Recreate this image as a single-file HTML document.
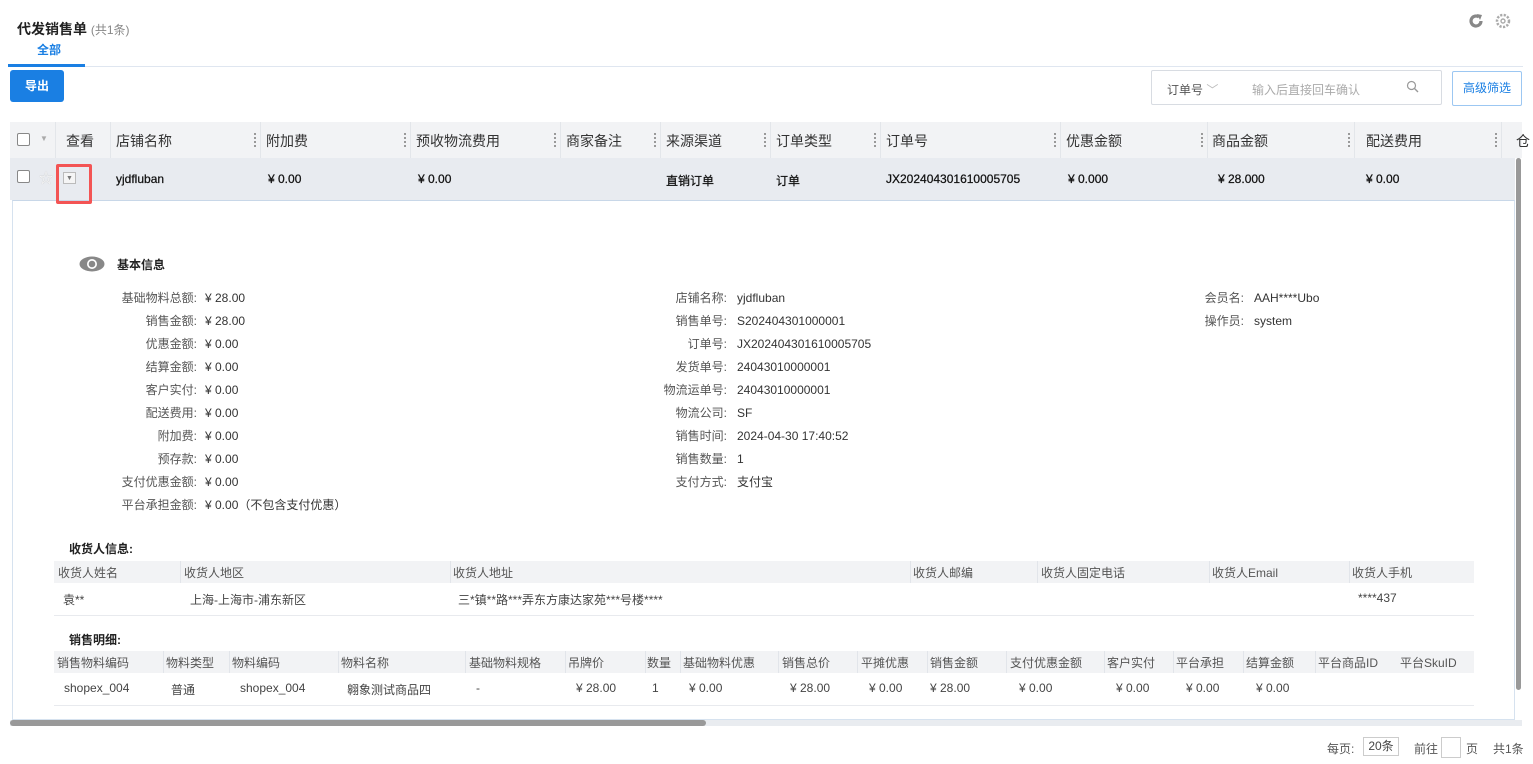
<!DOCTYPE html>
<html><head><meta charset="utf-8">
<style>
*{margin:0;padding:0;box-sizing:border-box}
body{width:1533px;height:764px;overflow:hidden;background:#fff;font-family:"Liberation Sans","Noto Sans CJK SC",sans-serif;color:#333;position:relative}
.a{position:absolute;white-space:nowrap}
.th{font-size:14px;color:#333;top:131px}
.td{font-size:12px;color:#111;top:172px;font-weight:normal;-webkit-text-stroke:0.25px #111}
.sep{position:absolute;top:133px;width:2px;height:14px;border-left:2px dotted #999}
.vl{position:absolute;top:122px;height:36px;width:1px;background:#e3e6ea}
.lab{position:absolute;font-size:12px;color:#555;text-align:right}
.val{position:absolute;font-size:12px;color:#333}
.h2{font-size:12px;color:#555}
.t2{font-size:12px;color:#444}
.cv{position:absolute;width:1px;background:#e2e5ea}
</style></head><body>
<div class="a" style="left:17px;top:19px;font-size:14px;font-weight:bold;color:#222">代发销售单 <span style="font-weight:normal;font-size:12px;color:#888">(共1条)</span></div>
<div class="a" style="left:37px;top:41px;font-size:12px;color:#1a7fe3;font-weight:bold">全部</div>
<div class="a" style="left:8px;top:66px;width:1515px;height:1px;background:#dfe6f0"></div>
<div class="a" style="left:8px;top:64px;width:77px;height:3px;background:#1a7fe3"></div>
<svg class="a" style="left:1468px;top:13px" width="16" height="16" viewBox="0 0 16 16"><path d="M13 8a5 5 0 1 1-2-4" fill="none" stroke="#888" stroke-width="3.2"/><path d="M9 1l5 1-2 5z" fill="#888"/></svg>
<svg class="a" style="left:1495px;top:13px" width="16" height="16" viewBox="0 0 16 16"><circle cx="8" cy="8" r="6" fill="none" stroke="#aaa" stroke-width="2.5" stroke-dasharray="2.2 1.4"/><circle cx="8" cy="8" r="2" fill="none" stroke="#aaa" stroke-width="1.4"/></svg>
<div class="a" style="left:10px;top:70px;width:54px;height:32px;background:#1a7fe3;border-radius:3px;color:#fff;font-size:12px;font-weight:bold;text-align:center;line-height:32px">导出</div>
<div class="a" style="left:1151px;top:70px;width:291px;height:35px;border:1px solid #d8dce2;border-radius:2px"></div>
<div class="a" style="left:1167px;top:81px;font-size:12px;color:#555">订单号 <span style="color:#bbb">﹀</span></div>
<div class="a" style="left:1252px;top:81px;font-size:12px;color:#aaa">输入后直接回车确认</div>
<svg class="a" style="left:1406px;top:80px" width="14" height="14" viewBox="0 0 14 14"><circle cx="5.5" cy="5.5" r="4" fill="none" stroke="#999" stroke-width="1.2"/><path d="M8.5 8.5l3.5 3.5" stroke="#999" stroke-width="1.4"/></svg>
<div class="a" style="left:1452px;top:71px;width:70px;height:35px;border:1px solid #9cc7f2;border-radius:2px;color:#1a7fe3;font-size:12px;text-align:center;line-height:33px">高级筛选</div>

<div class="a" style="left:10px;top:122px;width:1512px;height:36px;background:#f2f3f5"></div>
<div class="a" style="left:10px;top:158px;width:1505px;height:42px;background:#e8ebf0"></div>
<div class="vl" style="left:55px"></div><div class="vl" style="left:110px"></div><div class="vl" style="left:260px"></div><div class="vl" style="left:410px"></div><div class="vl" style="left:560px"></div><div class="vl" style="left:660px"></div><div class="vl" style="left:770px"></div><div class="vl" style="left:880px"></div><div class="vl" style="left:1060px"></div><div class="vl" style="left:1207px"></div><div class="vl" style="left:1354px"></div><div class="vl" style="left:1501px"></div>
<div class="sep" style="left:254px"></div><div class="sep" style="left:404px"></div><div class="sep" style="left:554px"></div><div class="sep" style="left:654px"></div><div class="sep" style="left:764px"></div><div class="sep" style="left:874px"></div><div class="sep" style="left:1054px"></div><div class="sep" style="left:1201px"></div><div class="sep" style="left:1348px"></div><div class="sep" style="left:1495px"></div>
<div class="a" style="left:17px;top:133px;width:13px;height:13px;border:1px solid #888;border-radius:2px;background:#fff"></div>
<div class="a" style="left:40px;top:134px;font-size:8px;color:#aaa">▼</div>
<div class="a th" style="left:66px">查看</div><div class="a th" style="left:116px">店铺名称</div><div class="a th" style="left:266px">附加费</div><div class="a th" style="left:416px">预收物流费用</div><div class="a th" style="left:566px">商家备注</div><div class="a th" style="left:666px">来源渠道</div><div class="a th" style="left:776px">订单类型</div><div class="a th" style="left:886px">订单号</div><div class="a th" style="left:1066px">优惠金额</div><div class="a th" style="left:1212px">商品金额</div><div class="a th" style="left:1366px">配送费用</div><div class="a th" style="left:1516px">仓</div>

<div class="a" style="left:17px;top:170px;width:13px;height:13px;border:1px solid #888;border-radius:2px;background:#fff"></div>
<div class="a" style="left:39px;top:168px;font-size:14px;color:#fff;text-shadow:0 0 1px #aaa">☆</div>
<div class="a td" style="left:116px">yjdfluban</div><div class="a td" style="left:268px">¥ 0.00</div><div class="a td" style="left:418px">¥ 0.00</div><div class="a td" style="left:666px">直销订单</div><div class="a td" style="left:776px">订单</div><div class="a td" style="left:886px">JX202404301610005705</div><div class="a td" style="left:1068px">¥ 0.000</div><div class="a td" style="left:1218px">¥ 28.000</div><div class="a td" style="left:1366px">¥ 0.00</div>

<div class="a" style="left:12px;top:200px;width:1503px;height:520px;border:1px solid #d6e2ef;border-top:1px solid #c8d7e8;background:#fff"></div>
<div class="a" style="left:1516px;top:158px;width:5px;height:532px;background:#999;border-radius:3px"></div>
<div class="a" style="left:56px;top:164px;width:36px;height:40px;border:3px solid #f35454;border-radius:2px"></div>
<div class="a" style="left:63px;top:172px;width:13px;height:12px;border:1px solid #bbb;background:#f5f5f5;font-size:7px;color:#777;text-align:center;line-height:11px">▼</div>

<svg class="a" style="left:79px;top:256px" width="26" height="16" viewBox="0 0 26 16"><ellipse cx="13" cy="8" rx="12.5" ry="7.5" fill="#888"/><circle cx="13" cy="8" r="5" fill="#fff"/><circle cx="13" cy="8" r="3.3" fill="#888"/></svg>
<div class="a" style="left:117px;top:256px;font-size:12px;font-weight:bold;color:#222">基本信息</div>

<div class="lab" style="left:60px;width:137px;top:287px;line-height:23px">基础物料总额:<br>销售金额:<br>优惠金额:<br>结算金额:<br>客户实付:<br>配送费用:<br>附加费:<br>预存款:<br>支付优惠金额:<br>平台承担金额:</div>
<div class="val" style="left:205px;top:287px;line-height:23px">¥ 28.00<br>¥ 28.00<br>¥ 0.00<br>¥ 0.00<br>¥ 0.00<br>¥ 0.00<br>¥ 0.00<br>¥ 0.00<br>¥ 0.00<br>¥ 0.00（不包含支付优惠）</div>
<div class="lab" style="left:600px;width:127px;top:287px;line-height:23px">店铺名称:<br>销售单号:<br>订单号:<br>发货单号:<br>物流运单号:<br>物流公司:<br>销售时间:<br>销售数量:<br>支付方式:</div>
<div class="val" style="left:737px;top:287px;line-height:23px">yjdfluban<br>S202404301000001<br>JX202404301610005705<br>24043010000001<br>24043010000001<br>SF<br>2024-04-30 17:40:52<br>1<br>支付宝</div>
<div class="lab" style="left:1150px;width:94px;top:287px;line-height:23px">会员名:<br>操作员:</div>
<div class="val" style="left:1254px;top:287px;line-height:23px">AAH****Ubo<br>system</div>

<div class="a" style="left:69px;top:540px;font-size:12px;font-weight:bold;color:#222">收货人信息:</div>
<div class="a" style="left:54px;top:561px;width:1420px;height:22px;background:#f2f3f5"></div>
<div class="a" style="left:54px;top:615px;width:1420px;height:1px;background:#e8eaee"></div>
<div class="cv" style="left:180px;top:561px;height:22px"></div><div class="cv" style="left:450px;top:561px;height:22px"></div><div class="cv" style="left:910px;top:561px;height:22px"></div><div class="cv" style="left:1037px;top:561px;height:22px"></div><div class="cv" style="left:1209px;top:561px;height:22px"></div><div class="cv" style="left:1349px;top:561px;height:22px"></div>
<div class="a h2" style="left:58px;top:564px">收货人姓名</div><div class="a h2" style="left:184px;top:564px">收货人地区</div><div class="a h2" style="left:453px;top:564px">收货人地址</div><div class="a h2" style="left:913px;top:564px">收货人邮编</div><div class="a h2" style="left:1041px;top:564px">收货人固定电话</div><div class="a h2" style="left:1212px;top:564px">收货人Email</div><div class="a h2" style="left:1352px;top:564px">收货人手机</div>
<div class="a t2" style="left:63px;top:591px">袁**</div><div class="a t2" style="left:190px;top:591px">上海-上海市-浦东新区</div><div class="a t2" style="left:458px;top:591px">三*镇**路***弄东方康达家苑***号楼****</div><div class="a t2" style="left:1358px;top:591px">****437</div>

<div class="a" style="left:69px;top:631px;font-size:12px;font-weight:bold;color:#222">销售明细:</div>
<div class="a" style="left:54px;top:651px;width:1420px;height:22px;background:#f2f3f5"></div>
<div class="a" style="left:54px;top:705px;width:1420px;height:1px;background:#e8eaee"></div>
<div class="cv" style="left:163px;top:651px;height:22px"></div><div class="cv" style="left:229px;top:651px;height:22px"></div><div class="cv" style="left:338px;top:651px;height:22px"></div><div class="cv" style="left:465px;top:651px;height:22px"></div><div class="cv" style="left:565px;top:651px;height:22px"></div><div class="cv" style="left:645px;top:651px;height:22px"></div><div class="cv" style="left:680px;top:651px;height:22px"></div><div class="cv" style="left:778px;top:651px;height:22px"></div><div class="cv" style="left:857px;top:651px;height:22px"></div><div class="cv" style="left:927px;top:651px;height:22px"></div><div class="cv" style="left:1006px;top:651px;height:22px"></div><div class="cv" style="left:1104px;top:651px;height:22px"></div><div class="cv" style="left:1173px;top:651px;height:22px"></div><div class="cv" style="left:1243px;top:651px;height:22px"></div><div class="cv" style="left:1315px;top:651px;height:22px"></div>
<div class="a h2" style="left:57px;top:654px">销售物料编码</div><div class="a h2" style="left:166px;top:654px">物料类型</div><div class="a h2" style="left:232px;top:654px">物料编码</div><div class="a h2" style="left:341px;top:654px">物料名称</div><div class="a h2" style="left:469px;top:654px">基础物料规格</div><div class="a h2" style="left:568px;top:654px">吊牌价</div><div class="a h2" style="left:647px;top:654px">数量</div><div class="a h2" style="left:683px;top:654px">基础物料优惠</div><div class="a h2" style="left:782px;top:654px">销售总价</div><div class="a h2" style="left:861px;top:654px">平摊优惠</div><div class="a h2" style="left:930px;top:654px">销售金额</div><div class="a h2" style="left:1010px;top:654px">支付优惠金额</div><div class="a h2" style="left:1107px;top:654px">客户实付</div><div class="a h2" style="left:1176px;top:654px">平台承担</div><div class="a h2" style="left:1246px;top:654px">结算金额</div><div class="a h2" style="left:1318px;top:654px">平台商品ID</div><div class="a h2" style="left:1400px;top:654px">平台SkuID</div>
<div class="a t2" style="left:64px;top:681px">shopex_004</div><div class="a t2" style="left:171px;top:681px">普通</div><div class="a t2" style="left:240px;top:681px">shopex_004</div><div class="a t2" style="left:347px;top:681px">翱象测试商品四</div><div class="a t2" style="left:476px;top:681px">-</div><div class="a t2" style="left:576px;top:681px">¥ 28.00</div><div class="a t2" style="left:652px;top:681px">1</div><div class="a t2" style="left:689px;top:681px">¥ 0.00</div><div class="a t2" style="left:790px;top:681px">¥ 28.00</div><div class="a t2" style="left:869px;top:681px">¥ 0.00</div><div class="a t2" style="left:930px;top:681px">¥ 28.00</div><div class="a t2" style="left:1019px;top:681px">¥ 0.00</div><div class="a t2" style="left:1116px;top:681px">¥ 0.00</div><div class="a t2" style="left:1186px;top:681px">¥ 0.00</div><div class="a t2" style="left:1256px;top:681px">¥ 0.00</div>

<div class="a" style="left:10px;top:720px;width:1512px;height:6px;background:#e9ecf0"></div>
<div class="a" style="left:10px;top:720px;width:696px;height:6px;background:#999;border-radius:3px"></div>

<div class="a" style="left:1327px;top:740px;font-size:12px;color:#555">每页:</div>
<div class="a" style="left:1363px;top:737px;width:36px;height:19px;border:1px solid #ccc;font-size:12px;color:#444;text-align:center;line-height:17px">20条</div>
<div class="a" style="left:1414px;top:740px;font-size:12px;color:#555">前往</div>
<div class="a" style="left:1441px;top:737px;width:20px;height:21px;border:1px solid #ccc"></div>
<div class="a" style="left:1466px;top:740px;font-size:12px;color:#555">页</div>
<div class="a" style="left:1493px;top:740px;font-size:12px;color:#555">共1条</div>
</body></html>
